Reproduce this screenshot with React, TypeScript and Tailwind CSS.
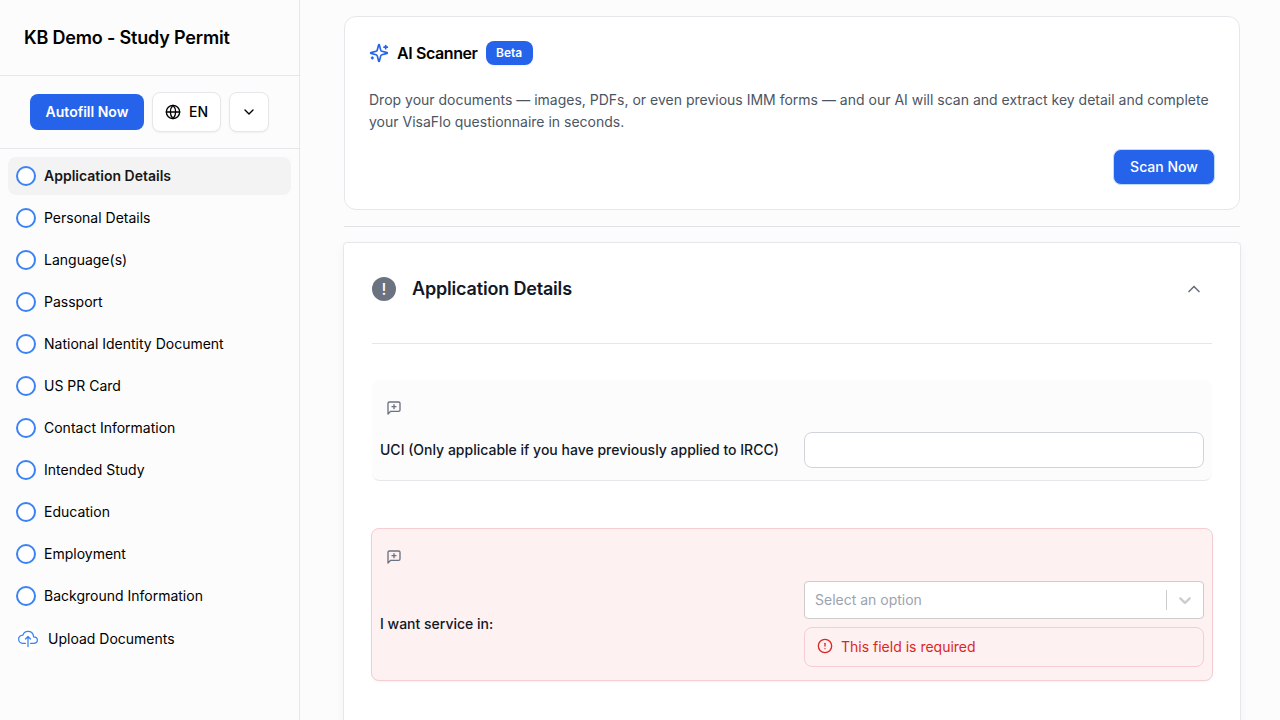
import React, { useState } from 'react';
import { ChevronDown, ChevronUp, CircleAlert, Globe } from 'lucide-react';
import { IoCloudUploadOutline } from 'react-icons/io5';

const sections = [
  'Application Details',
  'Personal Details',
  'Language(s)',
  'Passport',
  'National Identity Document',
  'US PR Card',
  'Contact Information',
  'Intended Study',
  'Education',
  'Employment',
  'Background Information',
];

interface SidebarProps {
  active: string;
  onSelect: (section: string) => void;
}

function Sidebar({ active, onSelect }: SidebarProps) {
  return (
    <aside className="w-[300px] shrink-0 border-r border-[#e5e7eb] flex flex-col">
      <div className="h-[76px] border-b border-[#e5e7eb] px-6 flex items-center">
        <h1 className="text-lg font-semibold tracking-[-0.01em] text-black">KB Demo - Study Permit</h1>
      </div>
      <div className="h-[73px] border-b border-[#e5e7eb] flex items-center justify-center gap-2">
        <button className="w-[114px] h-9 rounded-lg bg-[#2563eb] text-white text-sm font-semibold">Autofill Now</button>
        <button className="w-[69px] h-10 rounded-lg border border-[#e5e7eb] bg-white shadow-xs flex items-center justify-center gap-2 text-sm font-medium text-black">
          <Globe className="h-4 w-4" />
          EN
        </button>
        <button className="w-10 h-10 rounded-lg border border-[#e5e7eb] bg-white shadow-xs flex items-center justify-center text-black">
          <ChevronDown className="h-4 w-4" />
        </button>
      </div>
      <nav className="p-2 flex flex-col gap-1">
        {sections.map((section) => (
          <button
            key={section}
            onClick={() => onSelect(section)}
            className={`h-[38px] px-2 flex items-center gap-2 rounded-lg text-sm text-left ${
              section === active ? 'bg-[#f3f3f3] font-semibold text-[#171717]' : 'text-black'
            }`}
          >
            <span className="h-5 w-5 shrink-0 rounded-full border-2 border-[#3b82f6] bg-white" />
            {section}
          </button>
        ))}
        <button className="h-10 px-2 flex items-center gap-2 rounded-lg text-sm text-left text-black">
          <span className="h-6 w-6 rounded-full bg-white flex items-center justify-center text-[#3b82f6]">
            <IoCloudUploadOutline className="h-5 w-5" />
          </span>
          Upload Documents
        </button>
      </nav>
    </aside>
  );
}

function SparklesIcon() {
  return (
    <svg
      className="h-5 w-5 text-[#2563eb]"
      viewBox="0 0 24 24"
      fill="none"
      stroke="currentColor"
      strokeWidth="2"
      strokeLinecap="round"
      strokeLinejoin="round"
    >
      <path d="M9.937 15.5A2 2 0 0 0 8.5 14.063l-6.135-1.582a.5.5 0 0 1 0-.962L8.5 9.936A2 2 0 0 0 9.937 8.5l1.582-6.135a.5.5 0 0 1 .963 0L14.063 8.5A2 2 0 0 0 15.5 9.937l6.135 1.581a.5.5 0 0 1 0 .964L15.5 14.063a2 2 0 0 0-1.437 1.437l-1.582 6.135a.5.5 0 0 1-.963 0z" />
      <path d="M20 3v4" />
      <path d="M22 5h-4" />
      <path d="M4 17v2" />
      <path d="M5 18H3" />
    </svg>
  );
}

function ScannerCard() {
  return (
    <section className="h-[194px] rounded-xl border border-[#e5e7eb] bg-white p-6">
      <div className="flex items-center h-6">
        <SparklesIcon />
        <h2 className="ml-2 text-base font-semibold tracking-tight text-black">AI Scanner</h2>
        <span className="ml-2 h-6 w-[47px] flex items-center justify-center rounded-lg bg-[#2563eb] text-white text-xs font-semibold shadow-xs">
          Beta
        </span>
      </div>
      <p className="mt-6 text-sm leading-[22px] text-[#4b5563]">
        Drop your documents — images, PDFs, or even previous IMM forms — and our AI will scan and extract key detail and
        complete your VisaFlo questionnaire in seconds.
      </p>
      <div className="mt-4 flex justify-end">
        <button className="w-[102px] h-9 rounded-lg border border-[#bfdbfe] bg-[#2563eb] text-white text-sm font-medium">
          Scan Now
        </button>
      </div>
    </section>
  );
}

function CommentButton() {
  return (
    <button className="block ml-1.5 text-[#6b7280]">
      <svg
        className="h-4 w-4"
        viewBox="0 0 24 24"
        fill="none"
        stroke="currentColor"
        strokeWidth="2"
        strokeLinecap="round"
        strokeLinejoin="round"
      >
        <path d="M21 15a2 2 0 0 1-2 2H7l-4 4V5a2 2 0 0 1 2-2h14a2 2 0 0 1 2 2z" />
        <path d="M12 7v6" />
        <path d="M9 10h6" />
      </svg>
    </button>
  );
}

export default function App() {
  const [active, setActive] = useState('Application Details');
  const [uci, setUci] = useState('');

  return (
    <div className="h-screen overflow-hidden flex bg-[#fcfcfc] font-[Inter,sans-serif]">
      <Sidebar active={active} onSelect={setActive} />
      <main className="flex-1 pt-4 pl-11 pr-10">
        <ScannerCard />
        <hr className="mt-4 border-[#e0e2e5]" />
        <section className="-mx-px mt-[15px] h-[600px] rounded border border-[#e5e7eb] bg-white px-7 shadow-[0_4px_12px_rgba(0,0,0,0.04)]">
          <div className="h-[101px] pt-[34px] border-b border-[#e5e7eb]">
            <div className="flex items-center h-6">
              <span className="h-6 w-6 rounded-full bg-[#6b7280] text-white text-base font-medium flex items-center justify-center">
                !
              </span>
              <h2 className="ml-4 text-lg font-semibold tracking-[-0.01em] text-[#111827]">Application Details</h2>
              <ChevronUp className="ml-auto mr-2 h-5 w-5 text-[#6b7280]" />
            </div>
          </div>

          <div className="mt-9 h-[101px] rounded-lg border-b border-[#e5e7eb] bg-[#fcfcfc] px-2 pt-5">
            <CommentButton />
            <div className="mt-4 flex items-center justify-between">
              <label htmlFor="uci" className="text-sm font-medium text-[#111827]">
                UCI (Only applicable if you have previously applied to IRCC)
              </label>
              <input
                id="uci"
                value={uci}
                onChange={(e) => setUci(e.target.value)}
                className="w-[400px] h-9 px-3 rounded-lg border border-[#d1d5db] bg-white text-sm"
              />
            </div>
          </div>

          <div className="-mx-px mt-[47px] h-[153px] rounded-lg border border-[#f6cdd0] bg-[#fef1f1] px-2 pt-5 shadow-xs">
            <CommentButton />
            <div className="mt-4 flex items-center justify-between">
              <span className="text-sm font-medium text-[#111827]">I want service in:</span>
              <div className="w-[400px] flex flex-col gap-2">
                <div className="h-[38px] rounded border border-[#cccccc] bg-white flex items-center text-sm text-[#9ca3af]">
                  <span className="flex-1 pl-2.5">Select an option</span>
                  <span className="h-5 w-px bg-[#cccccc]" />
                  <span className="w-9 flex justify-center text-[#cccccc]">
                    <svg className="h-5 w-5" viewBox="0 0 20 20" fill="currentColor">
                      <path d="M4.516 7.548c0.436-0.446 1.043-0.481 1.576 0l3.908 3.747 3.908-3.747c0.533-0.481 1.141-0.446 1.574 0 0.436 0.445 0.408 1.197 0 1.615-0.406 0.418-4.695 4.502-4.695 4.502-0.217 0.223-0.502 0.335-0.787 0.335s-0.57-0.112-0.789-0.335c0 0-4.287-4.084-4.695-4.502s-0.436-1.17 0-1.615z" />
                    </svg>
                  </span>
                </div>
                <div className="h-10 px-3 rounded-lg border border-[#f6cdd0] bg-[#fef1f1] flex items-center gap-2 text-sm text-[#dc2626]">
                  <CircleAlert className="h-4 w-4 mb-0.5" />
                  This field is required
                </div>
              </div>
            </div>
          </div>
        </section>
      </main>
    </div>
  );
}
